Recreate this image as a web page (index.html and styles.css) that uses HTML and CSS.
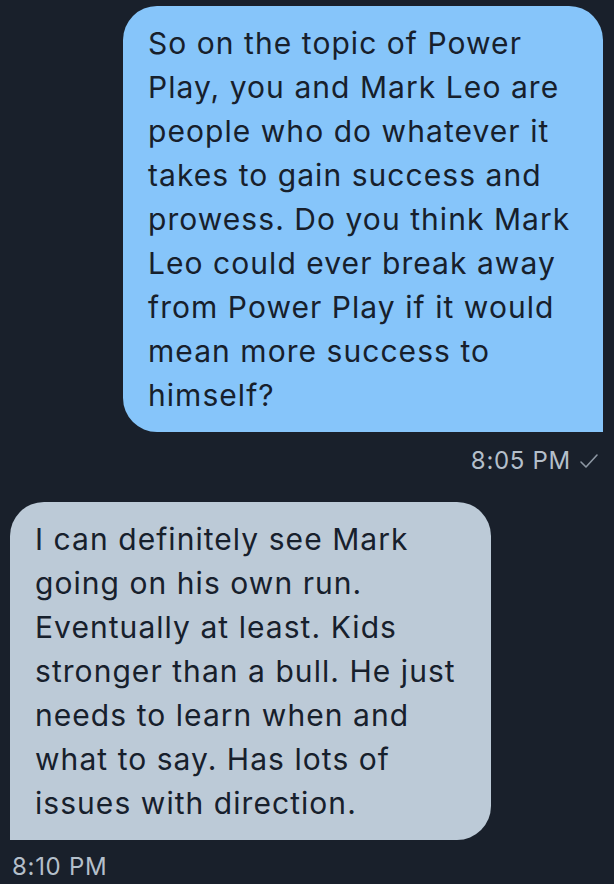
FILE: index.html
```html
<!DOCTYPE html>
<html>
<head>
<meta charset="utf-8">
<link rel="stylesheet" href="styles.css">
</head>
<body>
<div class="chat">
  <div class="msg out">
    <div class="bubble">So on the topic of Power<br>Play, you and Mark Leo are<br>people who do whatever it<br>takes to gain success and<br>prowess. Do you think Mark<br>Leo could ever break away<br>from Power Play if it would<br>mean more success to<br>himself?</div>
    <div class="meta">8:05 PM <svg class="check" width="20" height="16" viewBox="0 0 20 16"><path d="M2 9 L7 14 L18 2" fill="none" stroke="#8d97a3" stroke-width="1.6" stroke-linecap="round" stroke-linejoin="round"/></svg></div>
  </div>
  <div class="msg in">
    <div class="bubble">I can definitely see Mark<br>going on his own run.<br>Eventually at least. Kids<br>stronger than a bull. He just<br>needs to learn when and<br>what to say. Has lots of<br>issues with direction.</div>
    <div class="meta">8:10 PM</div>
  </div>
</div>
</body>
</html>
```

FILE: styles.css
```css
html, body {
  margin: 0;
  padding: 0;
  background: #19202b;
}
body {
  width: 614px;
  height: 884px;
  overflow: hidden;
  font-family: Inter, "Liberation Sans", sans-serif;
}
.chat {
  display: flex;
  flex-direction: column;
  padding: 6px 11px 0 10px;
}
.msg {
  display: flex;
  flex-direction: column;
}
.msg.out {
  align-items: flex-end;
}
.msg.in {
  align-items: flex-start;
  margin-top: 28px;
}
.bubble {
  font-size: 30px;
  line-height: 44px;
  color: #17202c;
  padding: 15px 25px;
  box-sizing: border-box;
  letter-spacing: 1.05px;
  white-space: nowrap;
}
.out .bubble {
  width: 480px;
  background: #86c5fa;
  border-radius: 34px 34px 0 34px;
}
.in .bubble {
  width: 481px;
  background: #bccad7;
  border-radius: 34px 34px 34px 0;
}
.meta {
  font-size: 24px;
  letter-spacing: 0.7px;
  color: #b4bfca;
  line-height: 26px;
  display: flex;
  align-items: center;
  gap: 8px;
}
.out .meta {
  margin-top: 16px;
  margin-right: 4px;
}
.in .meta {
  margin-top: 14px;
  margin-left: 2px;
}
.check {
  display: block;
}
```
